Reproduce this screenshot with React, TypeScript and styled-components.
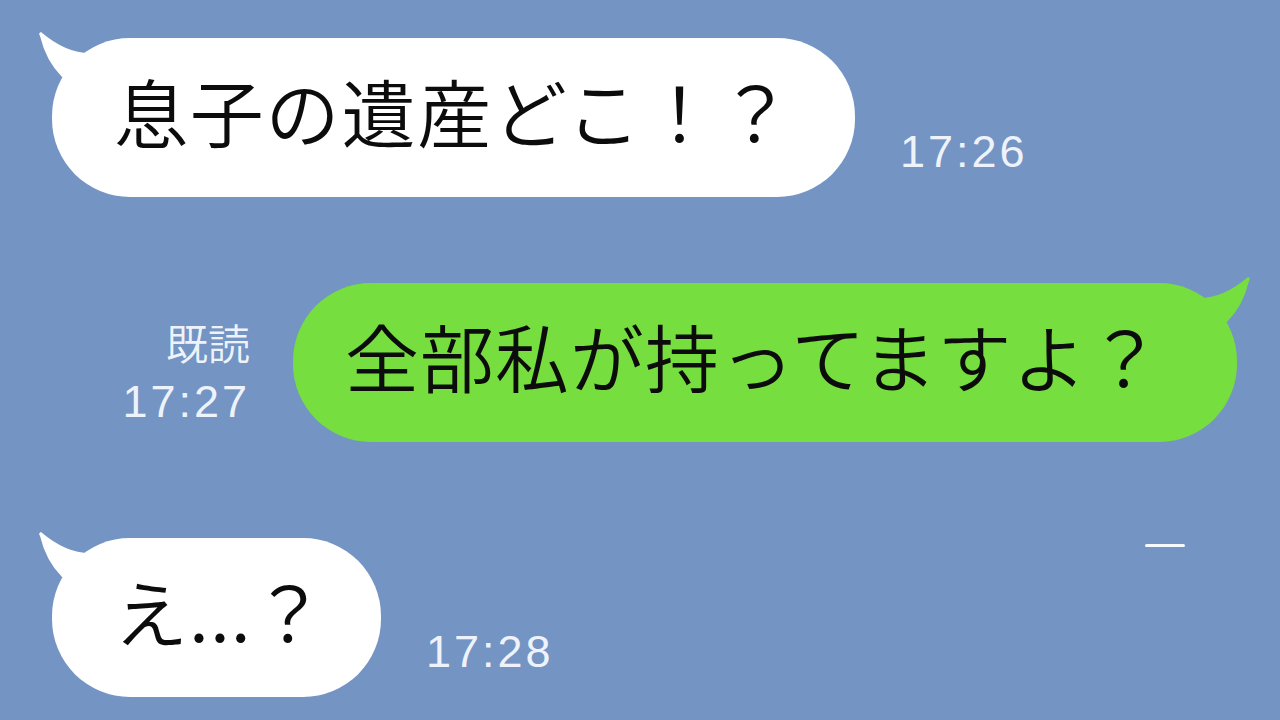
import React from "react";
import styled, { createGlobalStyle } from "styled-components";

const GlobalStyle = createGlobalStyle`
  html, body {
    margin: 0;
    padding: 0;
    background: #7494c3;
  }
  #root {
    width: 1280px;
    height: 720px;
    overflow: hidden;
  }
`;

const Chat = styled.div`
  width: 1280px;
  height: 720px;
  background: #7494c3;
  display: flex;
  flex-direction: column;
  box-sizing: border-box;
  padding-top: 38px;
`;

const Row = styled.div<{ $mine?: boolean; $gap: number }>`
  display: flex;
  align-items: flex-end;
  justify-content: ${(p) => (p.$mine ? "flex-end" : "flex-start")};
  padding: ${(p) => (p.$mine ? "0 43px 0 0" : "0 0 0 52px")};
  margin-top: ${(p) => p.$gap}px;
  gap: ${(p) => (p.$mine ? 43 : 45)}px;
`;

const Bubble = styled.div<{ $mine?: boolean; $w: number; $pl: number; $ls?: number }>`
  position: relative;
  box-sizing: border-box;
  width: ${(p) => p.$w}px;
  height: 159px;
  border-radius: 78px;
  background: ${(p) => (p.$mine ? "#77de3f" : "#ffffff")};
  display: flex;
  align-items: center;
  padding: 0 0 16px ${(p) => p.$pl}px;
  font-family: "Noto Sans CJK JP", "Noto Sans", sans-serif;
  font-weight: 350;
  font-size: 74px;
  line-height: 1;
  letter-spacing: ${(p) => p.$ls ?? 1}px;
  color: #0c0c0c;
  white-space: nowrap;
`;

const Tail = styled.svg<{ $mine?: boolean }>`
  position: absolute;
  top: -7px;
  ${(p) => (p.$mine ? "right: -14px;" : "left: -14px;")}
  width: 60px;
  height: 60px;
  transform: ${(p) => (p.$mine ? "scaleX(-1)" : "none")};
`;

const Meta = styled.div`
  display: flex;
  flex-direction: column;
  align-items: flex-end;
  margin-bottom: 18px;
  color: #eef3fb;
`;

const Read = styled.div`
  font-family: "Noto Sans CJK JP", "Noto Sans", sans-serif;
  font-weight: 350;
  font-size: 42px;
  line-height: 46px;
  margin-bottom: 14px;
`;

const Time = styled.div<{ $bottom?: number }>`
  font-family: "Liberation Sans", Arial, sans-serif;
  font-size: 45px;
  line-height: 45px;
  letter-spacing: 3px;
  color: #eef3fb;
  margin-bottom: ${(p) => p.$bottom ?? 0}px;
`;

const Glint = styled.div`
  align-self: flex-start;
  margin: 6px 95px 0 auto;
  width: 40px;
  height: 3px;
  border-radius: 2px;
  background: #f6f9ff;
  filter: blur(0.5px);
`;

function BubbleTail({ mine }: { mine?: boolean }) {
  return (
    <Tail $mine={mine} viewBox="0 0 60 60">
      <path
        d="M3 1 Q0 2 2 5 Q8 30 24 46 L56 56 L56 22 Q30 24 3 1 Z"
        fill={mine ? "#77de3f" : "#ffffff"}
      />
    </Tail>
  );
}

export default function App() {
  return (
    <>
      <GlobalStyle />
      <Chat>
        <Row $gap={0}>
          <Bubble $w={803} $pl={62} $ls={1.8}>
            <BubbleTail />
            息子の遺産どこ！？
          </Bubble>
          <Time $bottom={23}>17:26</Time>
        </Row>
        <Row $mine $gap={86}>
          <Meta>
            <Read>既読</Read>
            <Time>17:27</Time>
          </Meta>
          <Bubble $mine $w={944} $pl={52}>
            <BubbleTail mine />
            全部私が持ってますよ？
          </Bubble>
        </Row>
        <Row $gap={96}>
          <Bubble $w={329} $pl={62}>
            <BubbleTail />
            え...？
          </Bubble>
          <Time $bottom={23}>17:28</Time>
          <Glint />
        </Row>
      </Chat>
    </>
  );
}
